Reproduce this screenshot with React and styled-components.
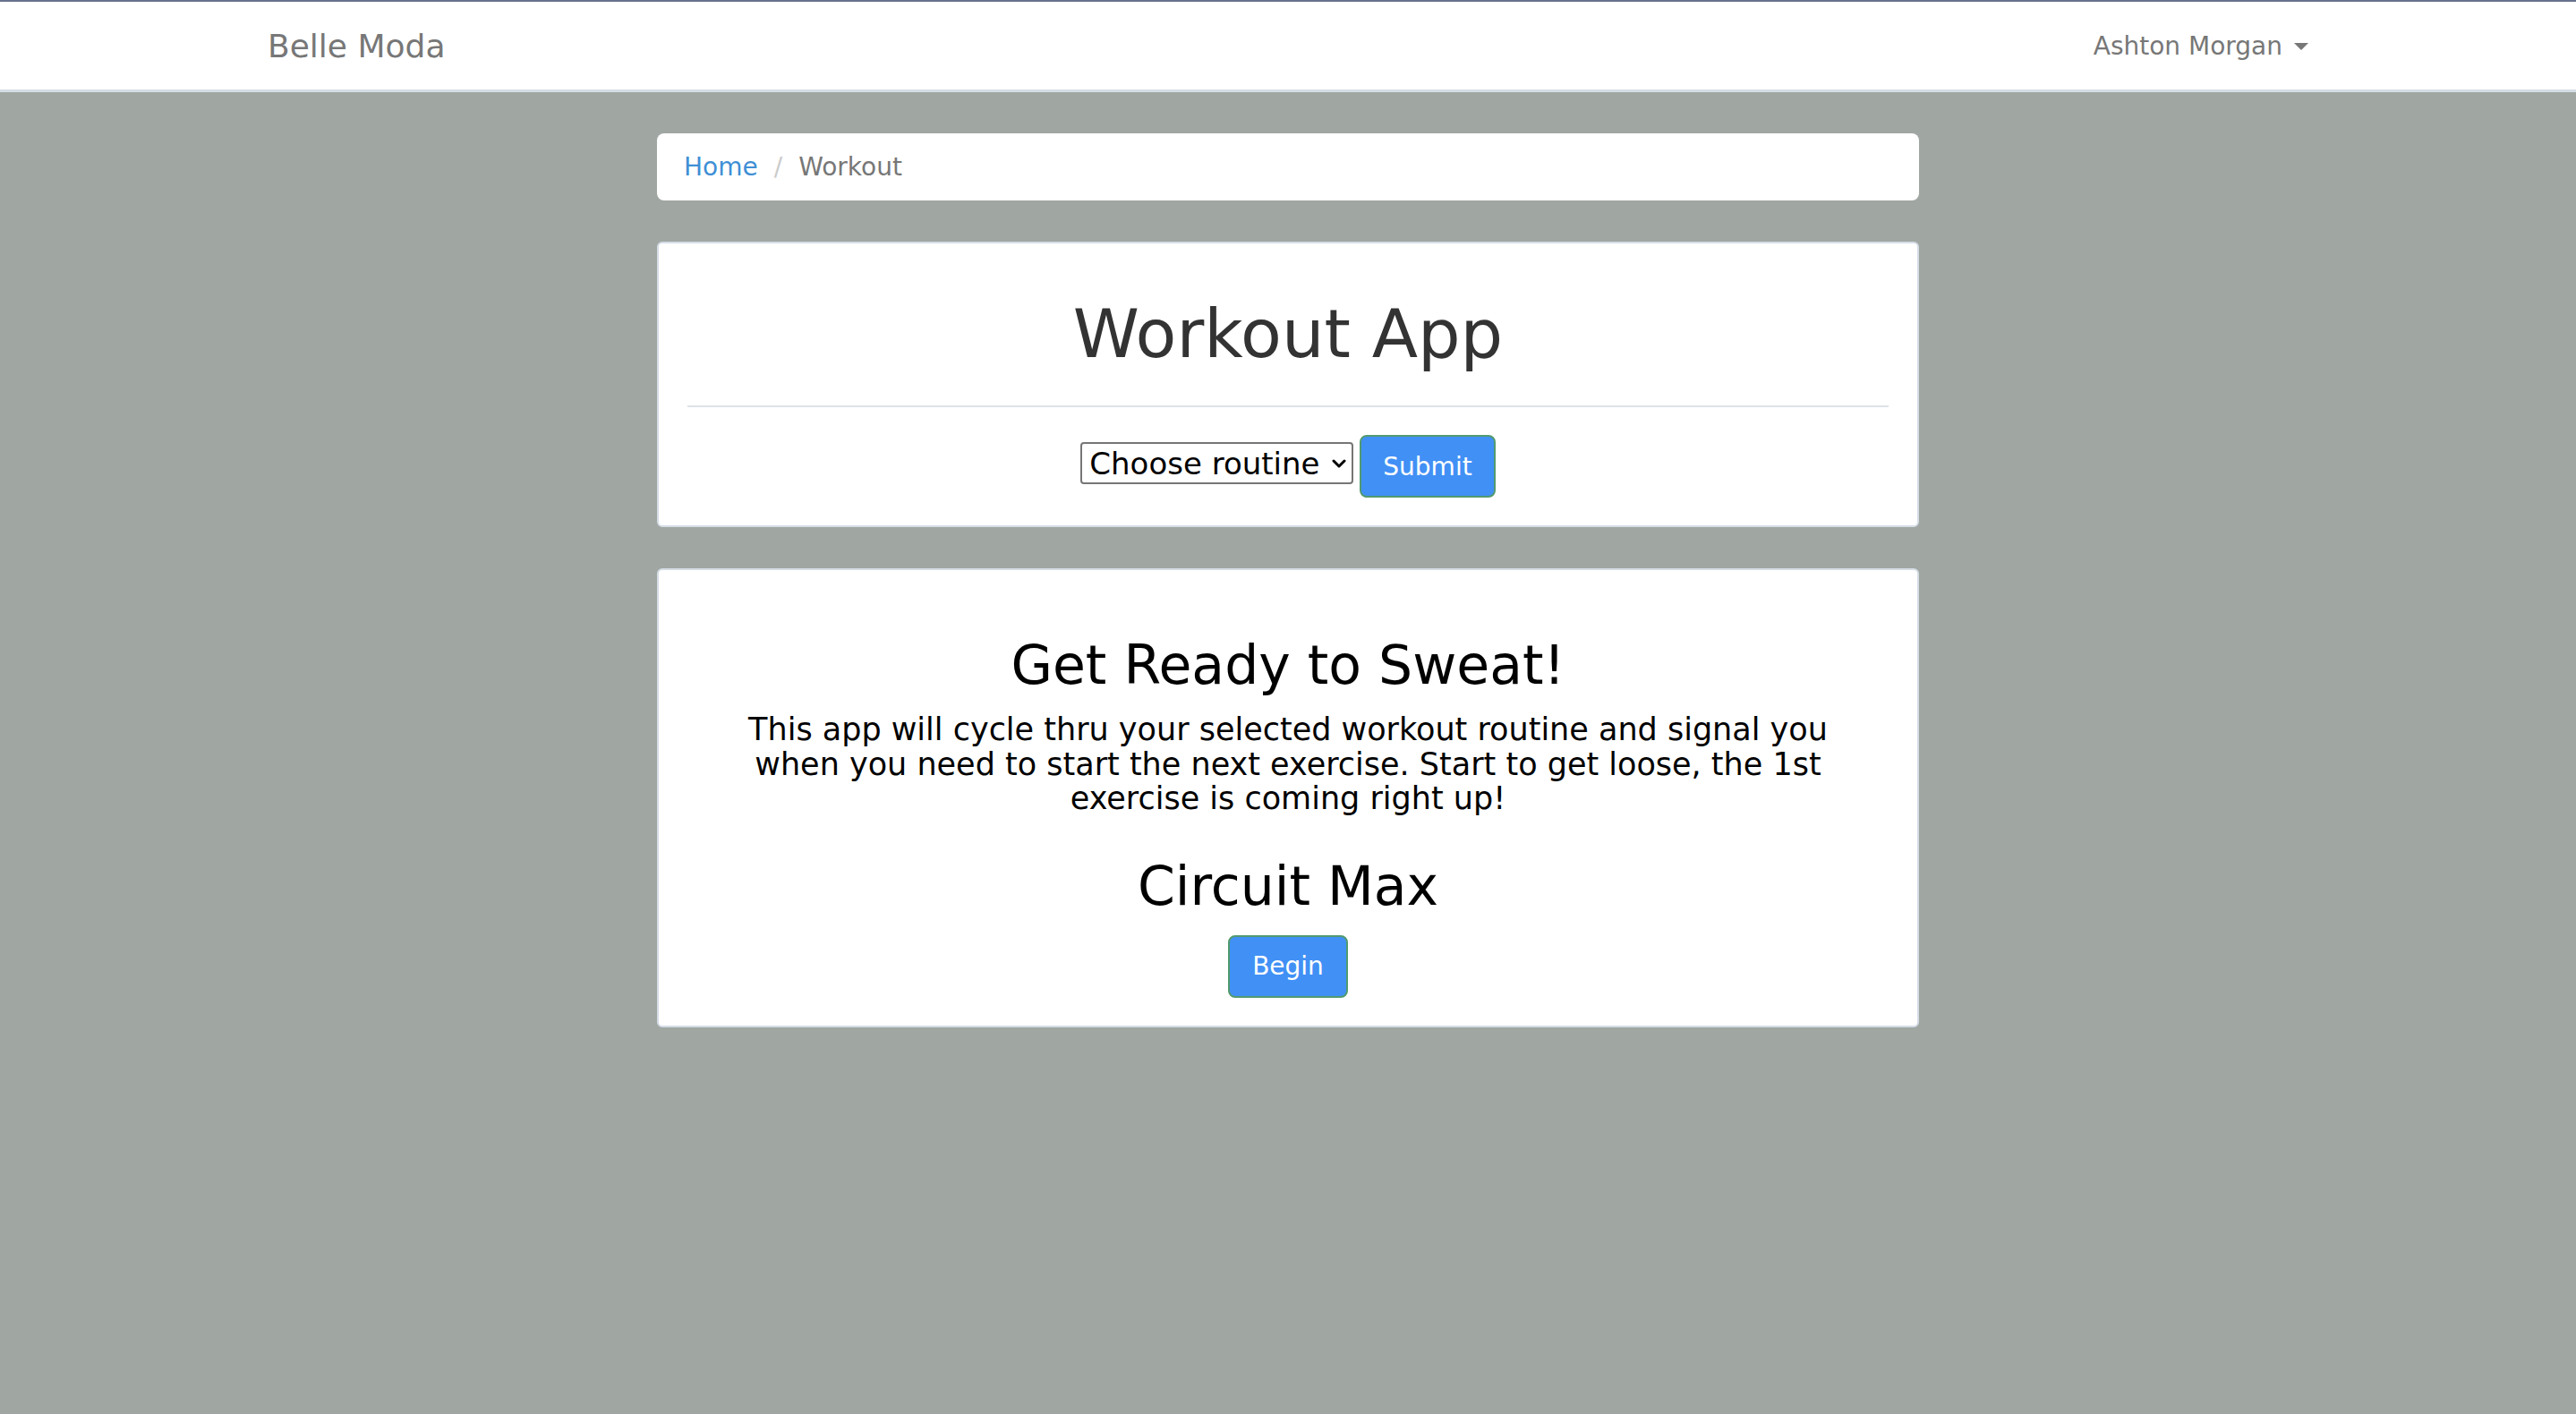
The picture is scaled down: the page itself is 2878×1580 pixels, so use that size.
import React from 'react';
import styled, { createGlobalStyle } from 'styled-components';

const GlobalStyle = createGlobalStyle`
  html, body {
    margin: 0;
    padding: 0;
  }
  body {
    background: #a0a7a3;
    font-family: "DejaVu Sans", "Liberation Sans", sans-serif;
    min-height: 1580px;
  }
`;

const Navbar = styled.nav`
  background: #ffffff;
  border-top: 2px solid #67728d;
  border-bottom: 3px solid #d5dde6;
  height: 98px;
`;

const NavInner = styled.div`
  width: 2340px;
  margin: 0 auto;
  padding: 0 30px;
  box-sizing: border-box;
  height: 100%;
  display: flex;
  align-items: center;
  justify-content: space-between;
`;

const Brand = styled.a`
  font-size: 36px;
  color: #777777;
  text-decoration: none;
`;

const UserMenu = styled.a`
  display: flex;
  align-items: center;
  gap: 13px;
  font-size: 28px;
  color: #777777;
  text-decoration: none;
`;

const Caret = styled.span`
  width: 0;
  height: 0;
  border-left: 8px solid transparent;
  border-right: 8px solid transparent;
  border-top: 8px solid #777777;
  margin-top: 2px;
`;

const Main = styled.main`
  width: 1410px;
  margin: 46px auto 0;
  display: flex;
  flex-direction: column;
  gap: 46px;
`;

const Breadcrumb = styled.ol`
  list-style: none;
  margin: 0;
  padding: 0 30px;
  height: 75px;
  background: #ffffff;
  border-radius: 8px;
  display: flex;
  align-items: center;
  font-size: 28px;
`;

const Crumb = styled.li`
  color: ${(p) => (p.$active ? '#777777' : '#3f8fd5')};
  &:not(:first-child)::before {
    content: "/";
    color: #cccccc;
    padding: 0 18px 0 18px;
  }
`;

const Card = styled.section`
  background: #ffffff;
  border: 2px solid #d5dde6;
  border-radius: 6px;
  padding: ${(p) => p.$pad};
  display: flex;
  flex-direction: column;
  align-items: center;
  text-align: center;
`;

const Title = styled.h1`
  margin: 0;
  font-size: 75px;
  line-height: 80px;
  font-weight: 400;
  color: #333333;
`;

const Rule = styled.hr`
  align-self: stretch;
  border: 0;
  border-top: 2px solid #dde3e8;
  margin: 40px 0 31px;
`;

const FormRow = styled.form`
  display: flex;
  align-items: center;
  gap: 7px;
`;

const SelectWrap = styled.div`
  position: relative;
  margin-bottom: 7px;
`;

const Select = styled.select`
  appearance: none;
  -webkit-appearance: none;
  font-family: inherit;
  font-size: 34px;
  color: #000000;
  background: #ffffff;
  border: 2px solid #767676;
  border-radius: 4px;
  height: 47px;
  width: 305px;
  padding: 0 30px 0 8px;
  box-sizing: border-box;
`;

const Chevron = styled.svg`
  position: absolute;
  right: 8px;
  top: 50%;
  transform: translateY(-50%);
  width: 16px;
  height: 12px;
  pointer-events: none;
`;

const Button = styled.button`
  font-family: inherit;
  font-size: 28px;
  color: #ffffff;
  background: #4190f5;
  border: 2px solid #519a70;
  border-radius: 8px;
  height: 70px;
  padding: 0 ${(p) => p.$padX || 24}px;
  cursor: pointer;
`;

const Heading = styled.h2`
  margin: 0;
  font-size: 60px;
  line-height: 66px;
  font-weight: 400;
  color: #000000;
`;

const Lead = styled.p`
  margin: 20px 0 45px;
  max-width: 1250px;
  font-size: 35px;
  line-height: 38.5px;
  color: #000000;
`;

const Actions = styled.div`
  margin-top: 22px;
`;

export default function App() {
  return (
    <>
      <GlobalStyle />
      <Navbar>
        <NavInner>
          <Brand href="#">Belle Moda</Brand>
          <UserMenu href="#">
            Ashton Morgan
            <Caret />
          </UserMenu>
        </NavInner>
      </Navbar>
      <Main>
        <Breadcrumb>
          <Crumb>Home</Crumb>
          <Crumb $active>Workout</Crumb>
        </Breadcrumb>

        <Card $pad="61px 32px 31px">
          <Title>Workout App</Title>
          <Rule />
          <FormRow onSubmit={(e) => e.preventDefault()}>
            <SelectWrap>
              <Select defaultValue="">
                <option value="">Choose routine</option>
                <option value="circuit">Circuit Max</option>
              </Select>
              <Chevron viewBox="0 0 16 12">
                <path d="M2 3l6 6 6-6" fill="none" stroke="#000" strokeWidth="3" strokeLinecap="round" strokeLinejoin="round" />
              </Chevron>
            </SelectWrap>
            <Button type="submit">Submit</Button>
          </FormRow>
        </Card>

        <Card $pad="73px 32px 31px">
          <Heading>Get Ready to Sweat!</Heading>
          <Lead>
            This app will cycle thru your selected workout routine and signal you
            when you need to start the next exercise. Start to get loose, the 1st
            exercise is coming right up!
          </Lead>
          <Heading>Circuit Max</Heading>
          <Actions>
            <Button type="button" $padX={25}>Begin</Button>
          </Actions>
        </Card>
      </Main>
    </>
  );
}
